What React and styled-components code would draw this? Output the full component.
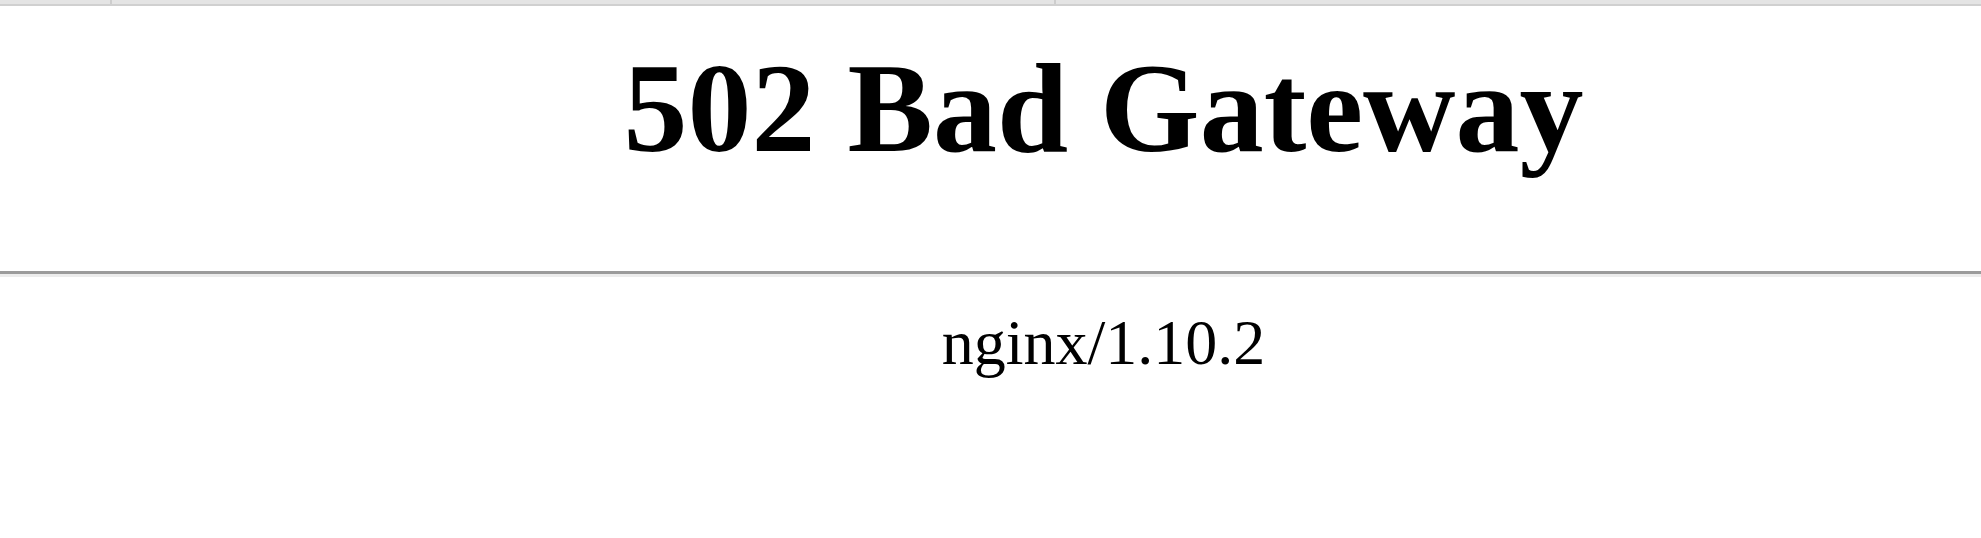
import styled, { createGlobalStyle } from 'styled-components';

const GlobalStyle = createGlobalStyle`
  html, body {
    margin: 0;
    padding: 0;
    background: #fff;
    overflow: hidden;
  }
  body {
    font-family: "Liberation Serif", "Times New Roman", serif;
    color: #000;
  }
`;

const Page = styled.div`
  width: 1981px;
  height: 538px;
  display: flex;
  flex-direction: column;
`;

// thin browser chrome strip at the very top
const TopStrip = styled.div`
  position: relative;
  height: 4px;
  background: #e4e4e4;
  border-bottom: 2px solid #d0d0d0;
`;

const TabMark = styled.span`
  position: absolute;
  top: 0;
  left: ${({ left }) => left}px;
  width: 2px;
  height: 4px;
  background: #cdcdcd;
`;

const Center = styled.div`
  padding-left: 226px;
  text-align: center;
`;

const Heading = styled.h1`
  margin: 0;
  padding-top: 29px;
  font-size: 128px;
  font-weight: 700;
  line-height: 147px;
`;

const Rule = styled.hr`
  margin: 89px 0 0;
  height: 0;
  border: 0;
  border-top: 3px solid #9b9b9b;
  border-bottom: 3px solid #ececec;
`;

const Footer = styled.div`
  margin-top: 29px;
  font-size: 64px;
  line-height: 74px;
`;

export default function App() {
  return (
    <>
      <GlobalStyle />
      <Page>
        <TopStrip>
          <TabMark left={110} />
          <TabMark left={1054} />
        </TopStrip>
        <Center>
          <Heading>502 Bad Gateway</Heading>
        </Center>
        <Rule />
        <Center>
          <Footer>nginx/1.10.2</Footer>
        </Center>
      </Page>
    </>
  );
}
